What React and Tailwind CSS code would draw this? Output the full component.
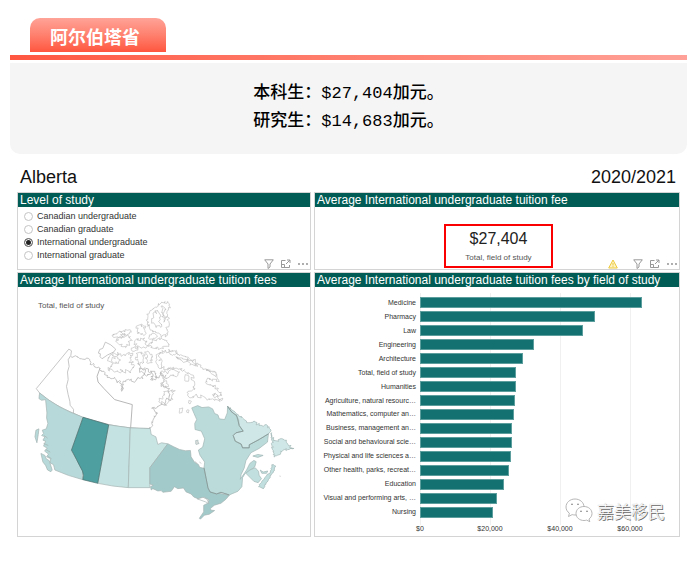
import React from "react";

const sans = "font-['Liberation_Sans',Arial,sans-serif]";

const levels = [
  "Canadian undergraduate",
  "Canadian graduate",
  "International undergraduate",
  "International graduate",
];

const AXIS_MAX = 70000;
const ticks = [
  { value: 0, label: "$0" },
  { value: 20000, label: "$20,000" },
  { value: 40000, label: "$40,000" },
  { value: 60000, label: "$60,000" },
];

const fees = [
  ["Medicine", 63300],
  ["Pharmacy", 49900],
  ["Law", 46600],
  ["Engineering", 32600],
  ["Architecture", 29400],
  ["Total, field of study", 27404],
  ["Humanities", 27300],
  ["Agriculture, natural resourc…", 27200],
  ["Mathematics, computer an…", 26900],
  ["Business, management an…", 26300],
  ["Social and behavioural scie…", 26150],
  ["Physical and life sciences a…", 26050],
  ["Other health, parks, recreat…", 25350],
  ["Education", 24050],
  ["Visual and performing arts, …", 22000],
  ["Nursing", 20800],
];

// Turns a coarse outline into a jagged shoreline with repeatable noise.
function coast(text, amp = 4, closed = true) {
  const pts = text.split(" ").map((p) => p.split(",").map(Number));
  let seed = pts.length * 97 + pts[0][0];
  const rnd = () => {
    seed = (seed * 9301 + 49297) % 233280;
    return seed / 233280 - 0.5;
  };
  const out = [];
  const count = closed ? pts.length : pts.length - 1;
  for (let i = 0; i < count; i++) {
    const [x1, y1] = pts[i];
    const [x2, y2] = pts[(i + 1) % pts.length];
    const len = Math.hypot(x2 - x1, y2 - y1);
    const steps = Math.max(1, Math.round(len / 4));
    out.push([x1, y1]);
    for (let s = 1; s < steps; s++) {
      const t = s / steps;
      out.push([
        x1 + (x2 - x1) * t + rnd() * amp * 2,
        y1 + (y2 - y1) * t + rnd() * amp * 2,
      ]);
    }
  }
  if (!closed) out.push(pts[pts.length - 1]);
  return (
    "M" +
    out.map((p) => p[0].toFixed(1) + "," + p[1].toFixed(1)).join("L") +
    (closed ? "Z" : "")
  );
}

const arctic = [
  ["440,52 460,50 465,60 460,90 463,110 457,135 460,150 440,158 430,145 420,140 405,130 395,105 402,88 415,72", 5],
  ["415,85 430,78 440,95 432,110 442,125 425,128 412,112", 5],
  ["442,62 452,70 446,84 454,98 448,112", 4],
  ["425,165 440,160 458,168 463,185 440,190 415,190 405,175", 5],
  ["292,152 305,146 315,140 330,138 325,150 310,158 298,158", 4],
  ["305,165 325,155 340,150 350,165 345,182 325,186 310,176", 7],
  ["318,140 338,136 350,142 340,148 324,148", 4],
  ["365,124 380,118 392,130 395,146 380,150 368,142", 7],
  ["360,168 378,160 396,168 400,184 380,190 362,184", 6],
  ["350,190 362,186 370,196 358,200", 3],
  ["405,150 420,146 428,156 415,164 402,160", 4],
  ["285,214 300,206 318,207 330,210 345,205 354,212 350,226 350,240 355,250 343,262 325,258 300,262 280,248 292,238 278,228", 7],
  ["292,222 308,216 318,226 306,236 296,234", 5],
  ["365,206 380,202 390,214 388,232 376,240 364,226", 6],
  ["396,202 412,208 414,226 400,236 392,220", 6],
  ["425,210 440,204 447,222 450,244 436,252 426,236", 2],
  ["435,205 475,197 495,213 525,222 550,235 565,250 605,262 610,290 580,280 575,290 608,310 622,333 595,330 624,346 585,345 545,330 530,340 520,325 540,315 540,290 530,270 510,255 485,250 455,255 440,240", 6],
  ["462,202 480,198 488,206 474,212", 2],
  ["484,216 504,220 524,228 546,238 550,244 528,236 500,226", 5],
  ["575,254 592,260 606,268 604,276 590,266", 3],
  ["442,258 460,264 476,256 492,262 486,276 470,272 456,280 444,272", 6],
  ["455,320 480,318 475,345 450,360 435,348", 6],
  ["440,294 456,288 462,302 450,310", 4],
  ["512,270 524,274 522,290 511,288", 1],
  ["495,372 505,370 503,384 495,386", 1],
  ["518,376 524,377 522,385 517,383", 1],
  ["523,348 531,350 527,358 522,355", 1],
];

const banks = "M272,172L288,180L303,193L298,201L278,211L262,222L256,216L257,207L251,205L255,194L264,191Z";

function CanadaMap() {
  return (
    <svg
      viewBox="0 0 888 750"
      className="block w-full"
      role="img"
      aria-label="Map of Canada by province"
      strokeLinejoin="round"
    >
      <g fill="#fff" stroke="#b9b9b9" strokeWidth="2.4">
        {arctic.map(([p, a], i) => (
          <path key={i} d={coast(p, a)} strokeWidth="1.8" />
        ))}
        <path d={banks} />
        <path
          fill="none"
          d={coast("256,258 270,262 280,280 300,278 308,290 318,290 321,320 325,292 342,284 362,290 370,278 385,282 392,262 380,250 400,252 415,268 408,285 425,282 440,262 450,284 440,305 460,312 466,330 450,362 430,365 412,370 428,385 418,395 412,418 407,432", 5, false)}
        />
        <path
          fill="none"
          d={coast("372,236 378,262 396,274 420,262 428,280", 6, false)}
        />
        <path d="M162,193L170,198L168,212L160,225L163,245L158,262L160,285L155,305L160,330L165,350L166,362L176,374L176,386Q118,363 74,325L64,312Z" />
        <path
          fill="none"
          d={coast("168,216 182,213 200,222 225,224 230,240 236,236 240,247 256,252", 4, false)}
        />
        <path
          fill="none"
          stroke="#a5a5a5"
          d="M256,250L247,275L250,292L268,312L300,345L353,360L348,430M176,386L204,399L282,420Q340,433 407,432"
        />
      </g>

      <g transform="translate(0 345)" stroke="#a3b2b1" strokeWidth="2">
        <path
          fill="#b7d9d9"
          d="M74,-20L72,-3L80,2L92,0L96,40L95,55L99,72L94,88L82,92L86,102L80,108L90,112L84,122L92,125L86,140L97,146L89,155L101,164L95,172L107,178L105,190L116,196L120,212Q160,230 204,241L204,215L185,180L170,152L205,53Q128,26 74,-20Z"
        />
        <path fill="#b7d9d9" d="M63,92L72,88L70,105L66,130L60,112Z" />
        <path
          fill="#b7d9d9"
          d="M78,162L90,168L94,178L103,184L112,212L108,217L98,212L92,198L84,188Z"
        />
        <path fill="none" d="M88,108L98,116M86,132L100,138M92,150L106,158M98,170L110,178" />
        <path fill="#c4e2e1" d="M282,76L347,85L341,265Q295,262 249,252Z" />
        <path
          fill="#c8e4e3"
          d="M347,85L407,87L410,105L424,112L430,135L441,130L460,133L406,205L406,265L341,265Z"
        />
        <path
          fill="#a3caca"
          d="M406,205L460,133L478,142L495,150L513,154L528,153L530,172L540,188L552,195L556,204L569,207L583,265L590,275L620,283L645,288L635,300L620,312L600,318L588,328L590,333L601,334L585,345L570,348L558,360L555,357L568,338L568,318L580,312L584,302L570,294L552,299L538,293L530,284L515,278L507,266L490,268L480,262L470,276L445,279L440,274L430,275L415,268L410,272L408,262L416,258L406,254Z"
        />
        <path fill="#fff" d="M549,299L566,294L578,300L584,313L574,308Z" />
        <path
          fill="#4e9f9f"
          stroke="#4a6b6b"
          d="M205,53L282,76L249,252L204,241L206,228L203,215L194,198L185,180L176,163L170,152Z"
        />
      </g>

      <g transform="translate(435 345)" stroke="#9fb3b2" strokeWidth="2">
        <path
          fill="#bbdbda"
          d="M97,25L115,18L128,24L148,22L160,28L166,42L176,46L180,58L196,60L204,40L205,20L215,35L220,40L232,48L238,60L240,78L252,95L230,100L222,108L228,125L246,134L250,145L270,145L270,136L300,120L328,103L325,128L300,147L275,160L260,184L255,206L246,225L243,240L262,212L272,192L284,183L291,187L287,202L268,216L258,222L250,235L248,262L236,276L210,287L185,279L172,284L152,278L146,266L134,205L136,188L122,168L117,152L130,143L136,118L126,95L107,90L106,72L112,60L104,42Z"
        />
        <path
          fill="#cfe8e7"
          d={
            coast("205,20 225,35 250,55 262,68 290,68 300,78 325,78 335,95", 4, false) +
            "L328,103L300,120L270,136L270,145L250,145L246,134L228,125L222,108L230,100L252,95L240,78L238,60L232,48L220,40Z"
          }
        />
        <path
          fill="none"
          stroke="#7d8e8d"
          d="M205,20L215,35L232,48L240,78L252,95L230,100L222,108L228,125L246,134L250,145L270,145L270,136L300,120L328,103M134,205L146,266L152,278L172,284L185,279L210,287"
        />
        <path
          fill="#cfe8e7"
          d={coast("338,100 344,125 370,118 382,122 386,134 405,147 390,150 372,152 360,166 345,173 340,150", 4)}
        />
        <path fill="#c1dfde" d="M260,222L272,212L288,205L298,216L300,228L307,238L297,250L284,246L272,234Z" />
        <path
          fill="#c1dfde"
          d={coast("298,262 308,246 320,232 334,218 338,196 350,200 345,215 328,240 312,269", 2)}
        />
        <path fill="#c1dfde" d="M303,212L312,218L326,215L322,222L308,222Z" />
        <path fill="#c1dfde" d="M281,170L296,165L312,168L296,174Z" />
        <path fill="#ddd" d={coast("108,124 116,122 119,132 110,135", 2)} />
        <path fill="none" stroke="#bbb" d="M108,186L113,194M120,188L126,192M361,230L365,231" />
      </g>
    </svg>
  );
}

function FilterIcon() {
  return (
    <svg viewBox="0 0 10 10" className="size-[10px]" fill="none" stroke="#999">
      <path d="M.7.8h8.6L6 5v3L4 9.500V5z" />
    </svg>
  );
}

function FocusIcon() {
  return (
    <svg viewBox="0 0 10 10" className="size-[10px]" fill="none" stroke="#999">
      <path d="M4.500 1.500h-4v7h8V6M.5 5.500h3v3M5 5l4-4M6 1h3v3" />
    </svg>
  );
}

function MoreIcon() {
  return (
    <svg viewBox="0 0 10 10" className="size-[10px]" fill="#888">
      <circle cx="1" cy="5" r=".9" />
      <circle cx="5" cy="5" r=".9" />
      <circle cx="9" cy="5" r=".9" />
    </svg>
  );
}

function WarningIcon() {
  return (
    <svg viewBox="0 0 10 10" className="mr-2 size-[10px]" fill="#fdf3c4" stroke="#ecc93d">
      <path d="M5 1L9.300 9H.7zM5 4v2.500M5 7.200v1" />
    </svg>
  );
}

function Toolbar({ warning }) {
  return (
    <div className="absolute right-0.5 bottom-0 flex items-center gap-[7px]">
      {warning && <WarningIcon />}
      <button type="button" aria-label="Filters" className="block"><FilterIcon /></button>
      <button type="button" aria-label="Focus mode" className="block"><FocusIcon /></button>
      <button type="button" aria-label="More options" className="block"><MoreIcon /></button>
    </div>
  );
}

function Panel({ title, children }) {
  return (
    <section className="relative flex min-w-0 flex-col border border-[#d4d4d4] bg-white">
      <h3 className="h-[14px] bg-[#015c55] pl-0.5 text-[12px] leading-[14px] whitespace-nowrap text-white">
        {title}
      </h3>
      {children}
    </section>
  );
}

function FeeChart() {
  return (
    <div className="flex pt-1.5 pr-[14px] pb-px">
      <div className="flex w-[105px] flex-col pt-[3px] pr-1 text-right text-[7px] leading-[8px] text-[#333]">
        <div className="flex h-[223px] flex-col">
          {fees.map(([name]) => (
            <div key={name} className="flex flex-1 items-center justify-end whitespace-nowrap">
              {name}
            </div>
          ))}
        </div>
      </div>
      <div className="min-w-0 flex-1">
        <div className="relative h-[232px] pt-[3px]">
          {ticks.map((t) => (
            <div
              key={t.value}
              className="absolute inset-y-0 w-px bg-[#f0f0f0]"
              style={{ left: `${(t.value / AXIS_MAX) * 100}%` }}
            />
          ))}
          <div className="relative flex h-[223px] flex-col">
            {fees.map(([name, fee]) => (
              <div key={name} className="flex flex-1 items-center">
                <div
                  className="h-[11px] border border-[#5c9d9d] bg-[#137171]"
                  style={{ width: `${(fee / AXIS_MAX) * 100}%` }}
                />
              </div>
            ))}
          </div>
        </div>
        <div className="relative h-[10px] text-[7px] leading-[8px] text-[#333]">
          {ticks.map((t) => (
            <span
              key={t.value}
              className="absolute top-0 -translate-x-1/2"
              style={{ left: `${(t.value / AXIS_MAX) * 100}%` }}
            >
              {t.label}
            </span>
          ))}
        </div>
      </div>
    </div>
  );
}

function Watermark() {
  return (
    <div className="absolute right-[14px] bottom-[13px] flex items-center gap-1">
      <svg viewBox="0 0 28 25" className="h-[25px] w-[28px]" fill="#fff" stroke="#a5a5a5" strokeWidth=".8">
        <path d="M10 1C5 1 1 4.500 1 9c0 2.600 1.300 4.700 3.400 6.200L3.500 18.500l3.700-1.900c1 .3 2 .4 3 .4C15.500 17 19 13.500 19 9S15 1 10 1z" />
        <path d="M19 8.500c-4.500 0-8 3-8 7s3.500 7 8 7c.9 0 1.800-.1 2.600-.4l3.200 1.600-.8-2.700c1.900-1.300 3-3.300 3-5.500 0-4-3.500-7-8-7z" />
        <path fill="none" stroke="#666" d="M6 6.500q1-1 2 0M12 6.500q1-1 2 0M15 13.500q1-1 2 0M21 13.500q1-1 2 0" />
      </svg>
      <span className="font-['Noto_Sans_CJK_SC',sans-serif] text-[17px] leading-[18px] font-light text-white [text-shadow:1px_1px_0_#666,0_0_1px_#999]">
        嘉美移民
      </span>
    </div>
  );
}

export default function App() {
  return (
    <main className={`min-h-screen bg-white pt-[18px] ${sans}`}>
      <header className="mr-3 ml-[10px]">
        <h1 className="ml-5 flex h-[34px] w-fit items-center rounded-t-[10px] bg-linear-to-b from-[#ffa398] to-[#ff553e] pt-0.5 pr-[26px] pl-5 font-['Noto_Sans_CJK_SC',sans-serif] text-[18px] leading-[26px] font-bold text-white">
          阿尔伯塔省
        </h1>
        <div className="mt-[3px] h-[5px] bg-linear-to-r from-[#ff5640] to-[#ffa198]" />
        <div className="mt-[3px] rounded-b-[10px] bg-[#f5f5f5] pt-[17px] pb-[18px] text-center font-['Liberation_Mono','Noto_Sans_CJK_SC',monospace] text-[17px] leading-[28px] font-medium text-black">
          <p>本科生：$27,404加元。</p>
          <p>研究生：$14,683加元。</p>
        </div>
      </header>

      <div className="mt-[11px] mr-[19px] ml-[17px]">
        <div className="mb-[3px] flex h-6 items-center justify-between pr-1 pl-[3px] text-[18px] text-[#111]">
          <h2>Alberta</h2>
          <span>2020/2021</span>
        </div>
        <div className="grid grid-cols-[294fr_366fr] gap-x-[3px] gap-y-0.5">
          <Panel title="Level of study">
            <fieldset className="flex h-[62px] flex-col pt-[3px] pl-1.5 text-[9px] leading-[13px] text-[#333]">
              {levels.map((name) => (
                <label key={name} className="flex items-center gap-1">
                  <input
                    type="radio"
                    name="level"
                    defaultChecked={name === "International undergraduate"}
                    className="size-[9px] appearance-none rounded-full border border-[#c4c4c4] bg-white checked:border-[#777] checked:bg-[#222] checked:shadow-[inset_0_0_0_1px_#fff]"
                  />
                  {name}
                </label>
              ))}
            </fieldset>
            <Toolbar />
          </Panel>
          <Panel title="Average International undergraduate tuition fee">
            <div className="flex justify-center pt-[17px] pl-[3px]">
              <div className="flex h-[44px] w-[109px] flex-col items-center border-2 border-[#fa0000] pt-1">
                <strong className="text-[16px] leading-[18px] font-normal text-[#222]">$27,404</strong>
                <span className="mt-[5px] text-[8px] leading-[10px] text-[#555]">Total, field of study</span>
              </div>
            </div>
            <Toolbar warning />
          </Panel>
          <Panel title="Average International undergraduate tuition fees">
            <div className="relative">
              <p className="absolute top-[14px] left-5 text-[8px] leading-[10px] text-[#555]">
                Total, field of study
              </p>
              <div className="-mt-0.5 -ml-[3px]">
                <CanadaMap />
              </div>
            </div>
          </Panel>
          <Panel title="Average International undergraduate tuition fees by field of study">
            <FeeChart />
            <Watermark />
          </Panel>
        </div>
      </div>
    </main>
  );
}
